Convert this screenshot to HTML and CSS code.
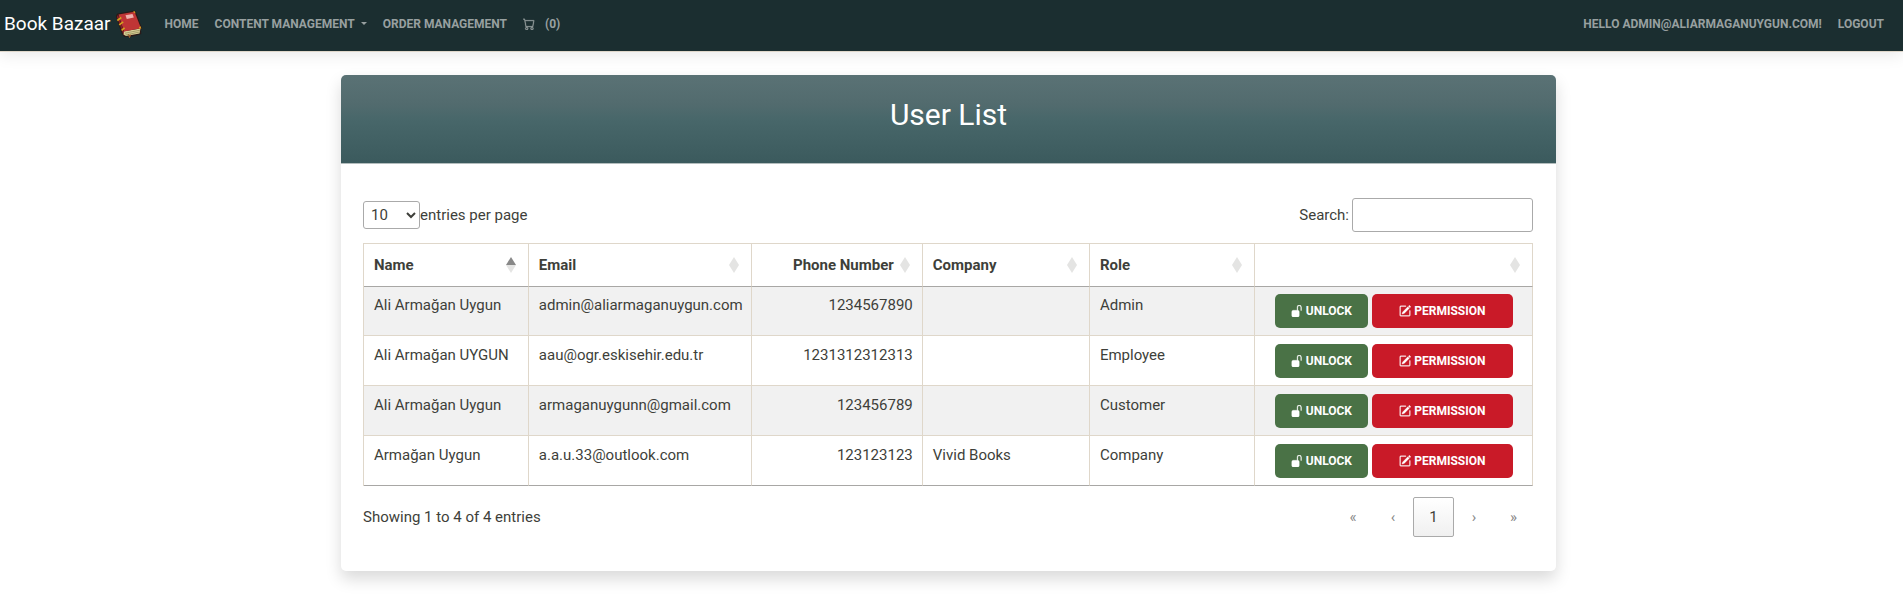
FILE: index.html
```html
<!DOCTYPE html>
<html lang="en">
<head>
<meta charset="utf-8">
<title>User List - Book Bazaar</title>
<link rel="stylesheet" href="styles.css">
</head>
<body>
<svg class="sprite" width="0" height="0" aria-hidden="true">
  <symbol id="unlock" viewBox="0 0 16 16"><path d="M11 1a2 2 0 0 0-2 2v4a2 2 0 0 1 2 2v5a2 2 0 0 1-2 2H3a2 2 0 0 1-2-2V9a2 2 0 0 1 2-2h5V3a3 3 0 0 1 6 0v4a.5.500 0 0 1-1 0V3a2 2 0 0 0-2-2"/></symbol>
  <symbol id="pencil" viewBox="0 0 16 16"><path d="M15.502 1.940a.5.500 0 0 1 0 .706L14.459 3.690l-2-2L13.502.646a.5.500 0 0 1 .707 0l1.293 1.293zm-1.750 2.456-2-2L4.939 9.210a.5.500 0 0 0-.121.196l-.805 2.414a.25.250 0 0 0 .316.316l2.414-.805a.5.500 0 0 0 .196-.120l6.813-6.814z"/><path fill-rule="evenodd" d="M1 13.500A1.500 1.500 0 0 0 2.500 15h11a1.500 1.500 0 0 0 1.500-1.500v-6a.5.500 0 0 0-1 0v6a.5.500 0 0 1-.500.500h-11a.5.500 0 0 1-.500-.500v-11a.5.500 0 0 1 .500-.500H9a.5.500 0 0 0 0-1H2.500A1.500 1.500 0 0 0 1 2.500z"/></symbol>
  <symbol id="sort" viewBox="0 0 10 16"><path class="up" d="M5 0L10 8H0z"/><path class="down" d="M0 8h10L5 16z"/></symbol>
</svg>
<header>
  <nav class="navbar">
    <a class="brand" href="#">Book Bazaar
      <svg class="book" viewBox="0 0 28 28" aria-hidden="true">
        <path d="M2.500 3.500L18 .8Q20 .3 21 2l6 16.500-1 1.500.3 4-9 2.500-8 .5-2.500-3L1 7Q.5 4.500 2.500 3.500z" fill="#2a1a17"/>
        <path d="M8 21.500l17.500-3-1 5L11 26l-2.500-1.500z" fill="#d8cf96"/>
        <path d="M10 23.200l15-3M10.500 25l14-3" stroke="#8d8a58" stroke-width=".7"/>
        <path d="M3.500 4.600L19.500 1.700 26 18.300 9 21.500z" fill="#bf3535"/>
        <path d="M3 4.800L9 21.500l-.5 3.200L1.800 7z" fill="#861f23"/>
        <path d="M10.500 5.200l7-1.300 1.300 3.700-7 1.400z" fill="#eeb1ae"/>
        <path d="M2.300 10.500l4-3M4.200 14.800l4-3M6.600 20.300l3-2.500" stroke="#d4a51e" stroke-width="1.600"/>
        <path d="M17.800 1.800l2-.500.8 2.300zM23.500 18.500l1.700-2.500 1.200 2.500z" fill="#dda91f"/>
        <path d="M13.500 24l1 3.500 1.200-3" fill="none" stroke="#a8642e"/>
      </svg>
    </a>
    <a class="link" href="#">Home</a>
    <a class="link" href="#">Content Management<span class="caret"></span></a>
    <a class="link" href="#">Order Management</a>
    <a class="link cart" href="#"><svg width="12" height="12" viewBox="0 0 16 16" fill="currentColor" stroke="currentColor" stroke-width=".4" aria-hidden="true"><path d="M0 1.500A.5.500 0 0 1 .500 1H2a.5.500 0 0 1 .485.379L2.890 3H14.500a.5.500 0 0 1 .491.592l-1.500 8A.5.500 0 0 1 13 12H4a.5.500 0 0 1-.491-.408L2.010 3.607 1.610 2H.500a.5.500 0 0 1-.500-.500M3.102 4l1.313 7h8.170l1.313-7zM5 12a2 2 0 1 0 0 4 2 2 0 0 0 0-4m7 0a2 2 0 1 0 0 4 2 2 0 0 0 0-4m-7 1a1 1 0 1 1 0 2 1 1 0 0 1 0-2m7 0a1 1 0 1 1 0 2 1 1 0 0 1 0-2"/></svg>(0)</a>
    <a class="link push" href="#">Hello admin@aliarmaganuygun.com!</a>
    <a class="link" href="#">Logout</a>
  </nav>
</header>
<main>
  <section class="card">
    <div class="card-header"><h1>User List</h1></div>
    <div class="card-body">
      <div class="toolbar">
        <div class="length"><select id="length"><option>10</option><option>25</option><option>50</option></select><label for="length">entries per page</label></div>
        <div class="search"><label for="search">Search:</label><input id="search" type="search"></div>
      </div>
      <table>
        <colgroup><col class="c-name"><col class="c-email"><col class="c-phone"><col class="c-company"><col class="c-role"><col class="c-actions"></colgroup>
        <thead>
          <tr>
            <th aria-sort="ascending"><div class="head">Name<svg class="sort asc" viewBox="0 0 10 16"><path class="up" d="M5 0L10 8H0z"/><path d="M0 8h10L5 16z"/></svg></div></th>
            <th><div class="head">Email<svg class="sort"><use href="#sort"/></svg></div></th>
            <th><div class="head num">Phone Number<svg class="sort"><use href="#sort"/></svg></div></th>
            <th><div class="head">Company<svg class="sort"><use href="#sort"/></svg></div></th>
            <th><div class="head">Role<svg class="sort"><use href="#sort"/></svg></div></th>
            <th><div class="head"><span></span><svg class="sort"><use href="#sort"/></svg></div></th>
          </tr>
        </thead>
        <tbody>
          <tr><td>Ali Armağan Uygun</td><td>admin@aliarmaganuygun.com</td><td class="num">1234567890</td><td></td><td>Admin</td>
            <td><div class="actions"><button class="btn unlock"><svg><use href="#unlock"/></svg>Unlock</button><button class="btn permission"><svg><use href="#pencil"/></svg>Permission</button></div></td></tr>
          <tr><td>Ali Armağan UYGUN</td><td>aau@ogr.eskisehir.edu.tr</td><td class="num">1231312312313</td><td></td><td>Employee</td>
            <td><div class="actions"><button class="btn unlock"><svg><use href="#unlock"/></svg>Unlock</button><button class="btn permission"><svg><use href="#pencil"/></svg>Permission</button></div></td></tr>
          <tr><td>Ali Armağan Uygun</td><td>armaganuygunn@gmail.com</td><td class="num">123456789</td><td></td><td>Customer</td>
            <td><div class="actions"><button class="btn unlock"><svg><use href="#unlock"/></svg>Unlock</button><button class="btn permission"><svg><use href="#pencil"/></svg>Permission</button></div></td></tr>
          <tr><td>Armağan Uygun</td><td>a.a.u.33@outlook.com</td><td class="num">123123123</td><td>Vivid Books</td><td>Company</td>
            <td><div class="actions"><button class="btn unlock"><svg><use href="#unlock"/></svg>Unlock</button><button class="btn permission"><svg><use href="#pencil"/></svg>Permission</button></div></td></tr>
        </tbody>
      </table>
      <div class="footer">
        <div>Showing 1 to 4 of 4 entries</div>
        <nav class="pages" aria-label="Pagination">
          <button disabled>«</button><button disabled>‹</button><button class="current">1</button><button disabled>›</button><button disabled>»</button>
        </nav>
      </div>
    </div>
  </section>
</main>
</body>
</html>
```
FILE: styles.css
```css
* { box-sizing: border-box; }
body {
  margin: 0;
  background: #fff;
  color: #3e3f3a;
  font: 15px/22px Roboto, sans-serif;
}
button, input, select { font: inherit; color: inherit; }
.sprite { position: absolute; }

.navbar {
  display: flex;
  align-items: center;
  gap: 16px;
  height: 52px;
  padding: 0 19px 4px 4px;
  background: #1b2e30;
  border-bottom: 1px solid #dfd7ca;
  box-shadow: 0 2px 16px rgba(0, 0, 0, .1);
}
.brand {
  display: flex;
  align-items: center;
  gap: 4px;
  margin-right: 6px;
  color: #fff;
  font-size: 19px;
  text-decoration: none;
  white-space: nowrap;
}
.book { width: 28px; height: 28px; }
.link {
  display: flex;
  align-items: center;
  color: #98a0a0;
  font-size: 12px;
  font-weight: 700;
  text-decoration: none;
  text-transform: uppercase;
  white-space: nowrap;
}
.cart { gap: 10px; }
.push { margin-left: auto; }
.caret {
  margin-left: 6px;
  border: 3px solid transparent;
  border-top-color: currentColor;
  border-bottom: 0;
}

main { padding: 23px 6px 24px 0; }
.card {
  max-width: 1215px;
  margin: 0 auto;
  border-radius: 5px;
  background: #fff;
  box-shadow: 0 8px 16px rgba(0, 0, 0, .15);
}
.card-header {
  padding: 22px 23px 30px;
  border-bottom: 1px solid #b3bdbd;
  border-radius: 5px 5px 0 0;
  background: linear-gradient(#5a7275, #526b6e 33%, #48676a 50%, #3b5a5d);
  color: #fff;
  text-align: center;
}
h1 { margin: 0; font-size: 30px; font-weight: 400; line-height: 36px; }
.card-body { padding: 34px 23px 34px 22px; }

.toolbar, .footer { display: flex; align-items: center; justify-content: space-between; }
.length, .search { display: flex; align-items: center; }
.search { gap: 3px; }
select {
  width: 57px;
  height: 28px;
  padding: 0 1px 0 3px;
  border: 1px solid #aaa;
  border-radius: 3px;
  background: transparent;
}
input {
  width: 181px;
  height: 34px;
  padding: 5px;
  border: 1px solid #aaa;
  border-radius: 3px;
  background: transparent;
}

table {
  width: 100%;
  margin: 11px 0;
  table-layout: fixed;
  border-collapse: separate;
  border-spacing: 0;
  border: solid #dfd7ca;
  border-width: 1px 0 0 1px;
}
.c-name, .c-role { width: 14.1%; }
.c-email { width: 19.1%; }
.c-phone { width: 14.6%; }
.c-company { width: 14.3%; }
.c-actions { width: 23.8%; }
th, td {
  border: solid #dfd7ca;
  border-width: 0 1px 1px 0;
  text-align: left;
  vertical-align: top;
}
th { padding: 10px 12px 10px 10px; border-bottom-color: #a8a7a5; font-weight: 700; }
td { height: 50px; padding: 8px 9px 7px 10px; }
tbody tr:first-child td { height: 49px; padding-top: 7px; }
tbody tr:nth-child(odd) { background: #f1f1f1; }
tbody tr:nth-child(even) { background: #fff; }
tbody tr:last-child td { border-bottom-color: #a8a7a5; }
.head { display: flex; align-items: center; justify-content: space-between; min-height: 22px; }
.head.num { justify-content: flex-end; gap: 6px; }
td.num { text-align: right; }
.sort { width: 10px; height: 16px; fill: #e4e4e3; }
.asc .up { fill: #888; }

.actions { display: flex; justify-content: center; gap: 4px; }
.btn {
  display: flex;
  align-items: center;
  justify-content: center;
  gap: 3px;
  width: 93px;
  height: 34px;
  padding: 0 0 1px;
  border: 0;
  border-radius: 5px;
  background: #4a7246;
  color: #fff;
  font-size: 12px;
  font-weight: 700;
  text-transform: uppercase;
}
.btn svg { width: 12px; height: 12px; fill: currentColor; stroke: currentColor; stroke-width: .4; }
.permission { width: 141px; background: #c91a28; }

.pages { display: flex; }
.pages button {
  width: 40px;
  height: 40px;
  padding: 0;
  border: 0;
  background: none;
  color: #888;
}
.pages button:last-child { width: 39px; }
.pages .current {
  width: 41px;
  border: 1px solid #aaa;
  border-radius: 2px;
  background: linear-gradient(#fff, #f0f0f0);
  color: #3e3f3a;
}
```
